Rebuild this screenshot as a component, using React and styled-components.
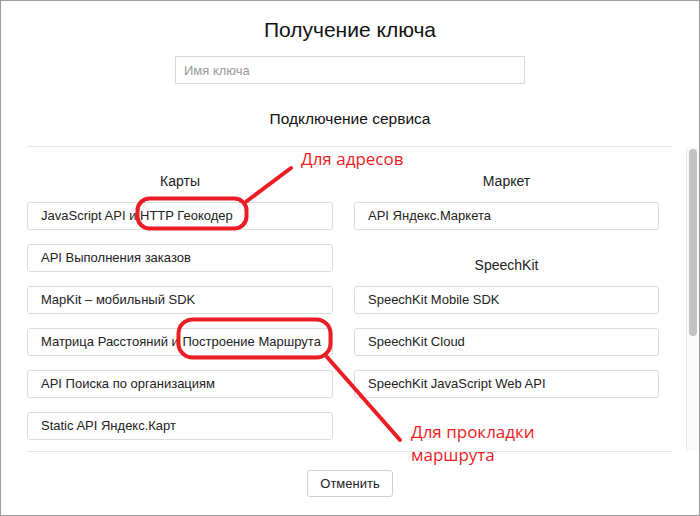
import React from 'react'
import { styled, createGlobalStyle } from 'styled-components'

const GlobalStyle = createGlobalStyle`
  html, body {
    margin: 0;
    padding: 0;
    background: #fff;
  }
  * {
    box-sizing: border-box;
  }
`;

const mapsServices = [
  'JavaScript API и HTTP Геокодер',
  'API Выполнения заказов',
  'MapKit – мобильный SDK',
  'Матрица Расстояний и Построение Маршрута',
  'API Поиска по организациям',
  'Static API Яндекс.Карт',
];

const speechServices = [
  'SpeechKit Mobile SDK',
  'SpeechKit Cloud',
  'SpeechKit JavaScript Web API',
];

const App = () => {
  return (
    <>
      <GlobalStyle />
      <Frame>
        <Title>Получение ключа</Title>
        <KeyInput placeholder="Имя ключа" />
        <Subtitle>Подключение сервиса</Subtitle>
        <Rule />
        <ScrollBody>
          <Columns>
            <Column>
              <GroupTitle>Карты</GroupTitle>
              {mapsServices.map((name) => (
                <ServiceButton key={name}>{name}</ServiceButton>
              ))}
            </Column>
            <Column>
              <GroupTitle>Маркет</GroupTitle>
              <ServiceButton>API Яндекс.Маркета</ServiceButton>
              <GroupTitle>SpeechKit</GroupTitle>
              {speechServices.map((name) => (
                <ServiceButton key={name}>{name}</ServiceButton>
              ))}
            </Column>
          </Columns>
          <ScrollTrack>
            <ScrollThumb />
          </ScrollTrack>
        </ScrollBody>
        <Rule />
        <Footer>
          <CancelButton>Отменить</CancelButton>
        </Footer>

        {/* red hand-drawn notes over the dialog */}
        <Marks viewBox="0 0 700 516" width="700" height="516">
          <rect x="137.5" y="198.5" width="109" height="30" rx="12" />
          <line x1="247" y1="201" x2="291" y2="168" />
          <rect x="178.5" y="319.5" width="152" height="38" rx="14" />
          <line x1="327" y1="357" x2="400" y2="440" />
        </Marks>
        <Note $top={146} $left={300}>Для адресов</Note>
        <Note $top={419} $left={410}>
          Для прокладки
          <br />
          маршрута
        </Note>
      </Frame>
    </>
  );
};

export default App;

const Frame = styled.div`
  position: relative;
  width: 700px;
  height: 516px;
  border: 1px solid #9c9c9c;
  display: flex;
  flex-direction: column;
  font-family: "Liberation Sans", Arial, sans-serif;
  color: #222;
  overflow: hidden;
`;

const Title = styled.h1`
  margin: 15px 0 0;
  font-size: 21px;
  line-height: 28px;
  font-weight: normal;
  text-align: center;
  color: #111;
`;

const KeyInput = styled.input`
  align-self: center;
  margin-top: 12px;
  width: 350px;
  height: 28px;
  border: 1px solid #d6d6d6;
  border-radius: 1px;
  padding: 0 8px;
  font-family: inherit;
  font-size: 13px;
  color: #222;
  outline: none;
  &::placeholder {
    color: #9a9a9a;
  }
`;

const Subtitle = styled.h2`
  margin: 25px 0 0;
  font-size: 15.5px;
  line-height: 20px;
  font-weight: normal;
  text-align: center;
  color: #111;
`;

const Rule = styled.div`
  height: 1px;
  margin: 17px 26px 0;
  background: #e6e6e6;
  & + & {
    margin-top: 0;
  }
`;

const ScrollBody = styled.div`
  display: flex;
  height: 304px;
  overflow: hidden;
  & + ${Rule} {
    margin-top: 0;
  }
`;

const Columns = styled.div`
  flex: 1;
  display: grid;
  grid-template-columns: 306px 305px;
  column-gap: 21px;
  align-items: start;
  padding: 13px 0 0 26px;
`;

const Column = styled.div`
  display: flex;
  flex-direction: column;
`;

const GroupTitle = styled.div`
  height: 42px;
  line-height: 42px;
  text-align: center;
  font-size: 14px;
  color: #222;
`;

const ServiceButton = styled.div`
  height: 28px;
  margin-bottom: 14px;
  padding: 0 13px;
  border: 1px solid #dcdcdc;
  border-radius: 3px;
  font-size: 13px;
  line-height: 26px;
  color: #222;
  white-space: nowrap;
`;

const ScrollTrack = styled.div`
  width: 13px;
  flex-shrink: 0;
  border-left: 1px solid #e8e8e8;
  background: #fafafa;
  padding: 2px 2px 0 2px;
`;

const ScrollThumb = styled.div`
  width: 8px;
  height: 187px;
  border-radius: 4px;
  background: #c2c2c2;
`;

const Footer = styled.div`
  display: flex;
  justify-content: center;
  padding-top: 18px;
`;

const CancelButton = styled.button`
  width: 86px;
  height: 27px;
  border: 1px solid #cfcfcf;
  border-radius: 3px;
  background: #fff;
  font-family: inherit;
  font-size: 13px;
  color: #222;
  padding: 0;
`;

const Marks = styled.svg`
  position: absolute;
  top: -1px;
  left: -1px;
  pointer-events: none;
  rect,
  line {
    fill: none;
    stroke: #ec1c24;
    stroke-width: 4;
    stroke-linecap: round;
  }
`;

const Note = styled.div`
  position: absolute;
  top: ${(p) => p.$top}px;
  left: ${(p) => p.$left}px;
  font-family: "Open Sans", "Noto Sans", sans-serif;
  font-size: 17px;
  line-height: 23px;
  color: #ec1c24;
  white-space: nowrap;
`;
